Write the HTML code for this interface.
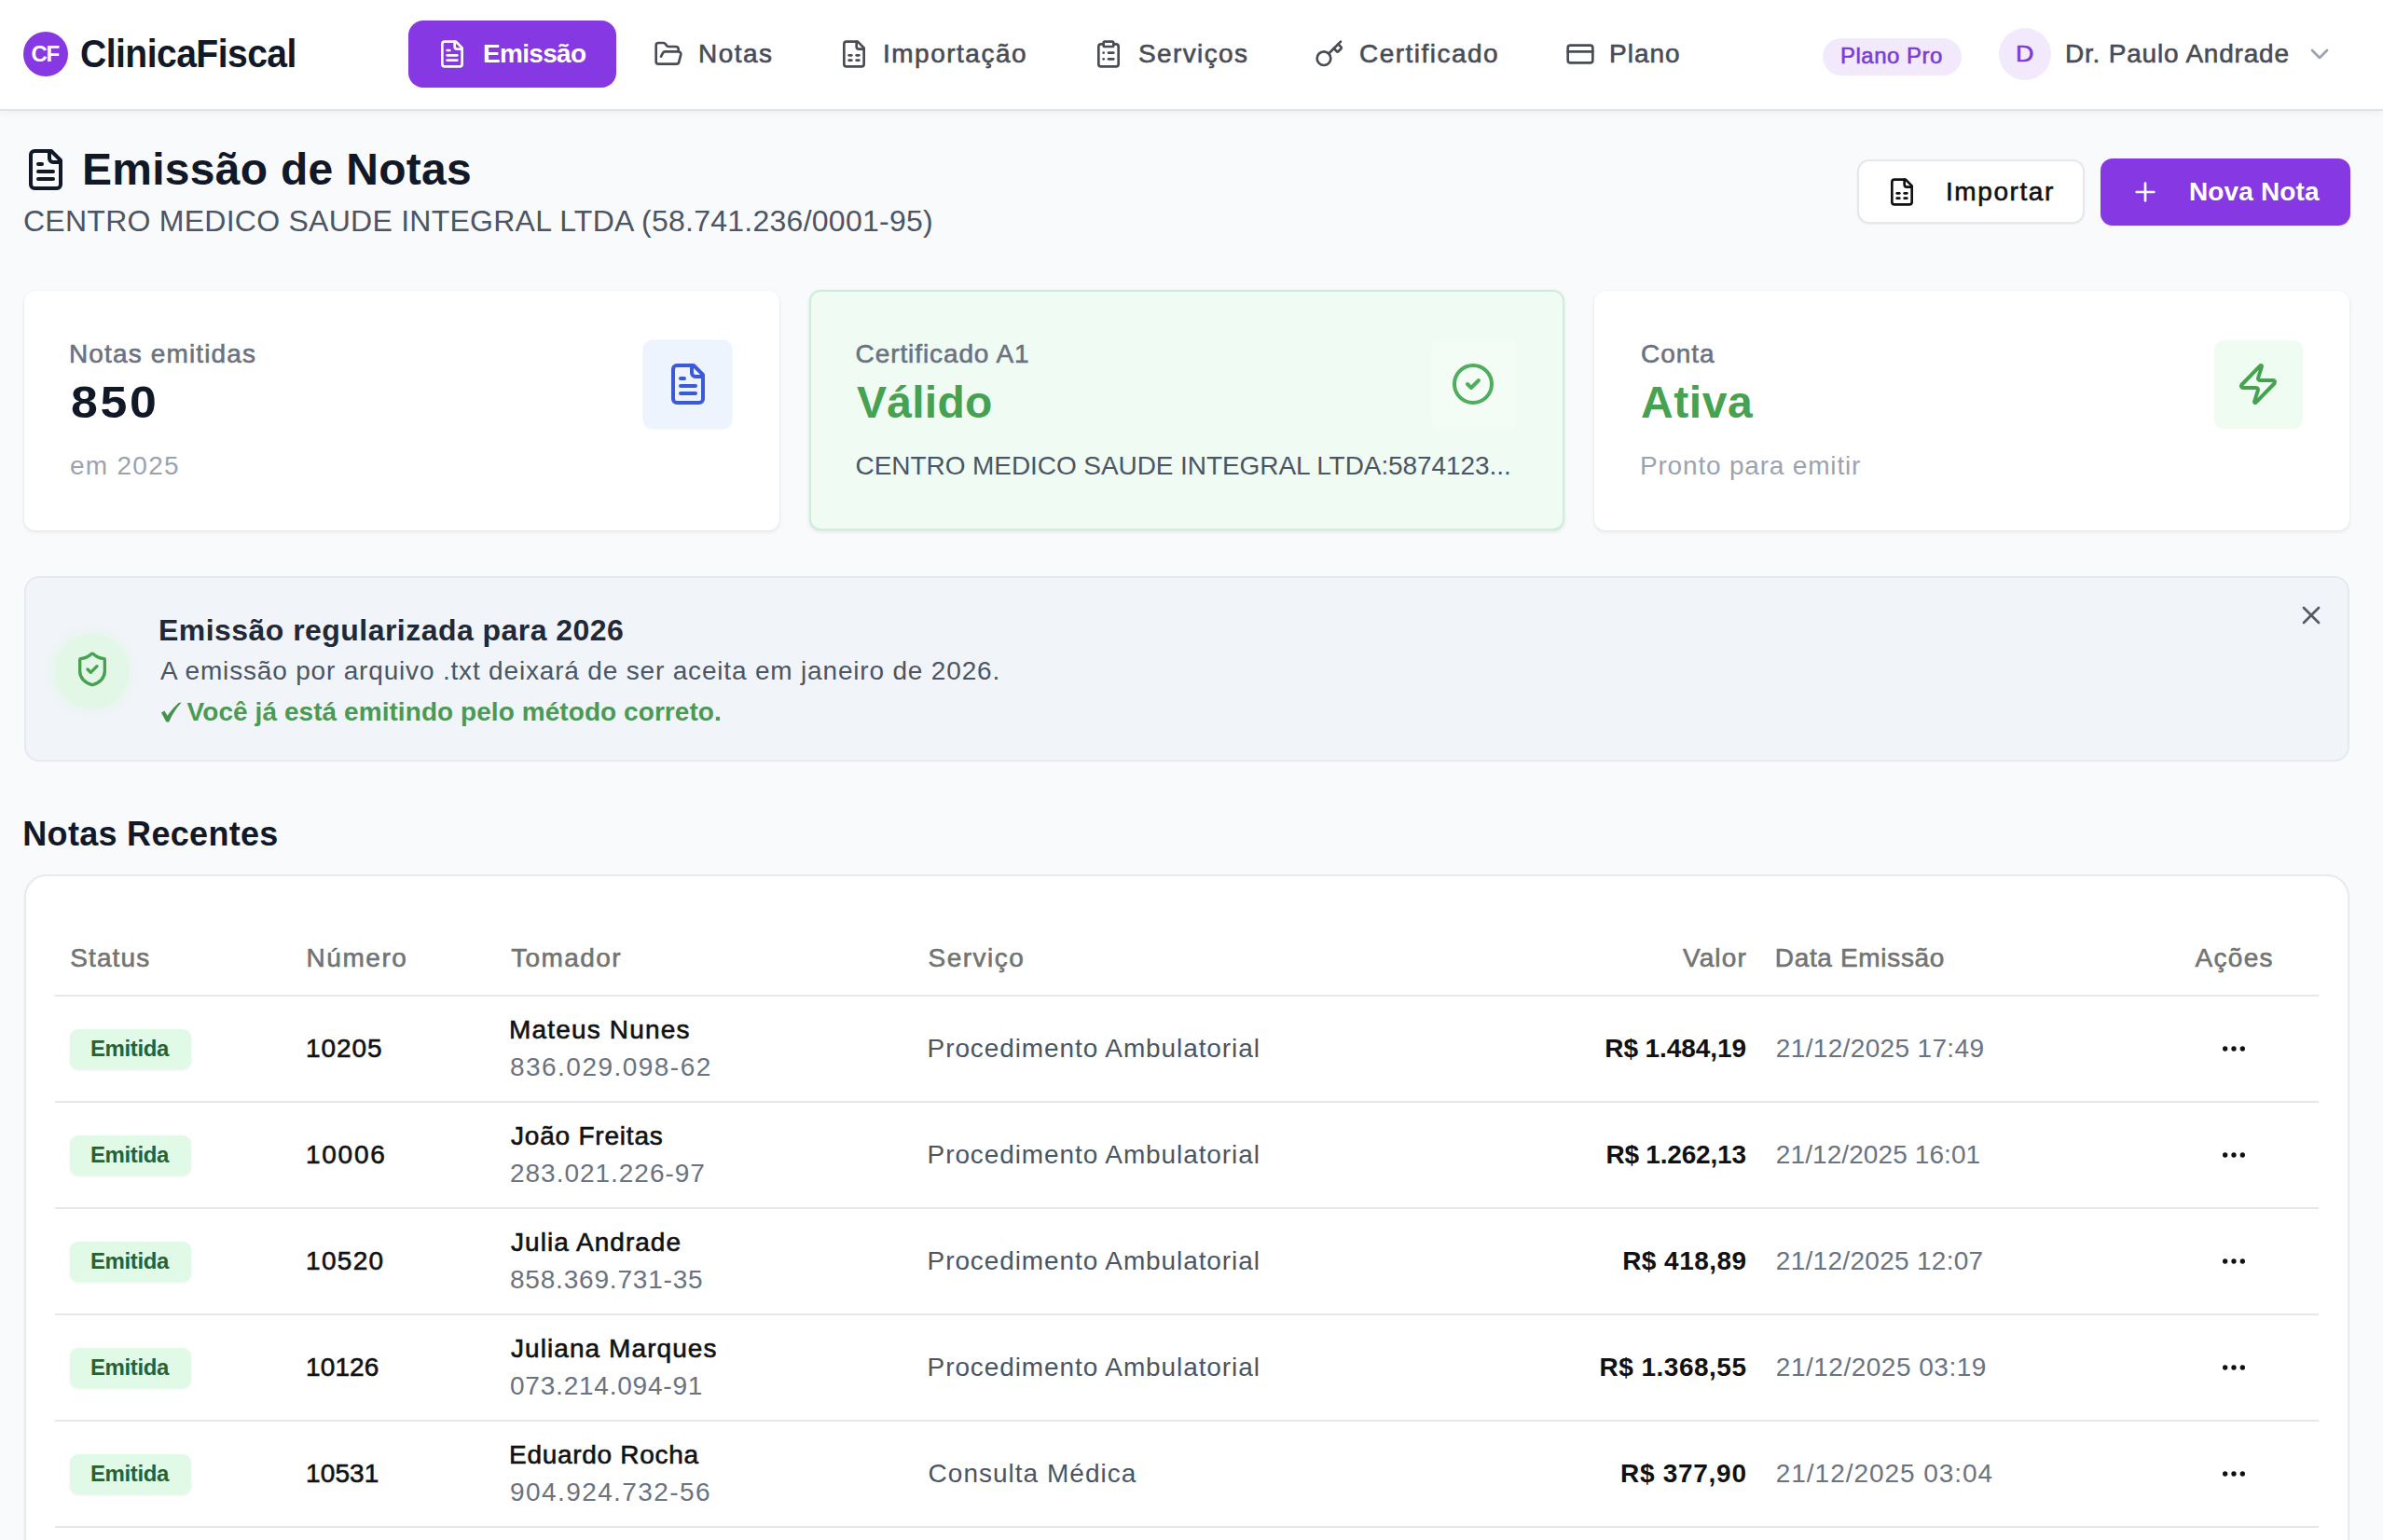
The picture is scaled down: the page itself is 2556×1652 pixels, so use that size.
<!DOCTYPE html>
<html lang="pt-BR"><head><meta charset="utf-8"><title>ClinicaFiscal</title>
<style>
html,body{margin:0;padding:0;}
body{width:2556px;height:1652px;overflow:hidden;position:relative;background:#f9fafb;font-family:"Liberation Sans",sans-serif;}
.b{position:absolute;box-sizing:border-box;}
.t{position:absolute;line-height:1;white-space:nowrap;}
.i{position:absolute;display:block;}
</style></head><body>

<div class="b" style="left:0px;top:0px;width:2556px;height:119px;background:#fff;border-bottom:2px solid #e1e3e6;box-shadow:0 2px 8px rgba(0,0,0,0.05);"></div>
<div class="b" style="left:25px;top:34px;width:48px;height:48px;background:#8639e2;border-radius:50%;"></div>
<div class="b" style="left:438px;top:22px;width:223px;height:72px;background:#8639e2;border-radius:16px;"></div>
<div class="b" style="left:1955px;top:41px;width:149px;height:40px;background:#f2eafc;border-radius:20px;"></div>
<div class="b" style="left:2144px;top:30px;width:56px;height:56px;background:#f2eafc;border-radius:50%;"></div>
<div class="b" style="left:1992px;top:171px;width:244px;height:69px;background:#fff;border:2px solid #e6e7ea;border-radius:13px;box-shadow:0 1px 2px rgba(0,0,0,0.05);"></div>
<div class="b" style="left:2253px;top:170px;width:268px;height:72px;background:#8639e2;border-radius:13px;box-shadow:0 1px 2px rgba(0,0,0,0.08);"></div>
<div class="b" style="left:25.5px;top:312px;width:810.0px;height:257px;background:#fff;border-radius:12px;box-shadow:0 2px 4px rgba(0,0,0,0.08),0 0 2px rgba(0,0,0,0.05);"></div>
<div class="b" style="left:690px;top:365px;width:95px;height:95px;background:#eef4fd;border-radius:10px;box-shadow:0 0 2px rgba(220,230,245,0.8);"></div>
<div class="b" style="left:867.5px;top:310.5px;width:810.0px;height:258.5px;background:#f0fcf3;border:2px solid #cdeed9;border-radius:12px;box-shadow:0 2px 4px rgba(0,0,0,0.08),0 0 2px rgba(0,0,0,0.05);"></div>
<div class="b" style="left:1535px;top:365px;width:92px;height:95px;background:#f3fcf5;border-radius:10px;"></div>
<div class="b" style="left:1709.5px;top:312px;width:810.0px;height:257px;background:#fff;border-radius:12px;box-shadow:0 2px 4px rgba(0,0,0,0.08),0 0 2px rgba(0,0,0,0.05);"></div>
<div class="b" style="left:2375px;top:365px;width:95px;height:95px;background:#effcf2;border-radius:10px;"></div>
<div class="b" style="left:25.5px;top:618px;width:2494.0px;height:199px;background:#f1f4f8;border:2px solid #e6e9ee;border-radius:16px;"></div>
<div class="b" style="left:58px;top:680px;width:80px;height:80px;background:#e2f7e6;border-radius:50%;box-shadow:0 0 8px 4px rgba(226,247,230,0.6);"></div>
<div class="b" style="left:25.5px;top:938.4px;width:2494.0px;height:821.6px;background:#fff;border:2px solid #e8eaee;border-radius:24px;box-shadow:0 1px 3px rgba(0,0,0,0.04);"></div>
<div class="b" style="left:58.6px;top:1067px;width:2428.0px;height:2px;background:#e5e7eb;"></div>
<div class="b" style="left:75px;top:1103.7px;width:130px;height:43.59999999999991px;background:#e1f9e7;border-radius:9px;box-shadow:0 1px 3px rgba(0,0,0,0.07);"></div>
<div class="b" style="left:58.6px;top:1181px;width:2428.0px;height:2px;background:#e5e7eb;"></div>
<div class="b" style="left:75px;top:1217.7px;width:130px;height:43.59999999999991px;background:#e1f9e7;border-radius:9px;box-shadow:0 1px 3px rgba(0,0,0,0.07);"></div>
<div class="b" style="left:58.6px;top:1295px;width:2428.0px;height:2px;background:#e5e7eb;"></div>
<div class="b" style="left:75px;top:1331.7px;width:130px;height:43.59999999999991px;background:#e1f9e7;border-radius:9px;box-shadow:0 1px 3px rgba(0,0,0,0.07);"></div>
<div class="b" style="left:58.6px;top:1409px;width:2428.0px;height:2px;background:#e5e7eb;"></div>
<div class="b" style="left:75px;top:1445.7px;width:130px;height:43.59999999999991px;background:#e1f9e7;border-radius:9px;box-shadow:0 1px 3px rgba(0,0,0,0.07);"></div>
<div class="b" style="left:58.6px;top:1523px;width:2428.0px;height:2px;background:#e5e7eb;"></div>
<div class="b" style="left:75px;top:1559.7px;width:130px;height:43.59999999999991px;background:#e1f9e7;border-radius:9px;box-shadow:0 1px 3px rgba(0,0,0,0.07);"></div>
<div class="b" style="left:58.6px;top:1637px;width:2428.0px;height:2px;background:#e5e7eb;"></div>
<svg class="i" style="left:469.0px;top:41.7px" width="32" height="32" viewBox="0 0 24 24" fill="none" stroke="#fff" stroke-width="2" stroke-linecap="round" stroke-linejoin="round"><path d="M15 2H6a2 2 0 0 0-2 2v16a2 2 0 0 0 2 2h12a2 2 0 0 0 2-2V7Z"/><path d="M14 2v4a2 2 0 0 0 2 2h4"/><path d="M10 9H8"/><path d="M16 13H8"/><path d="M16 17H8"/></svg>
<svg class="i" style="left:700.7px;top:42.0px" width="32" height="32" viewBox="0 0 24 24" fill="none" stroke="#484c55" stroke-width="2" stroke-linecap="round" stroke-linejoin="round"><path d="m6 14 1.5-2.9A2 2 0 0 1 9.24 10H20a2 2 0 0 1 1.94 2.5l-1.54 6a2 2 0 0 1-1.95 1.5H4a2 2 0 0 1-2-2V5a2 2 0 0 1 2-2h3.9a2 2 0 0 1 1.69.9l.81 1.2a2 2 0 0 0 1.67.9H18a2 2 0 0 1 2 2v2"/></svg>
<svg class="i" style="left:900.0px;top:42.0px" width="32" height="32" viewBox="0 0 24 24" fill="none" stroke="#484c55" stroke-width="2" stroke-linecap="round" stroke-linejoin="round"><path d="M15 2H6a2 2 0 0 0-2 2v16a2 2 0 0 0 2 2h12a2 2 0 0 0 2-2V7Z"/><path d="M14 2v4a2 2 0 0 0 2 2h4"/><path d="M8 13h2"/><path d="M14 13h2"/><path d="M8 17h2"/><path d="M14 17h2"/></svg>
<svg class="i" style="left:1173.0px;top:42.0px" width="32" height="32" viewBox="0 0 24 24" fill="none" stroke="#484c55" stroke-width="2" stroke-linecap="round" stroke-linejoin="round"><rect width="8" height="4" x="8" y="2" rx="1" ry="1"/><path d="M16 4h2a2 2 0 0 1 2 2v14a2 2 0 0 1-2 2H6a2 2 0 0 1-2-2V6a2 2 0 0 1 2-2h2"/><path d="M12 11h4"/><path d="M12 16h4"/><path d="M8 11h.01"/><path d="M8 16h.01"/></svg>
<svg class="i" style="left:1410.0px;top:42.0px" width="32" height="32" viewBox="0 0 24 24" fill="none" stroke="#484c55" stroke-width="2" stroke-linecap="round" stroke-linejoin="round"><path d="m15.5 7.5 2.3 2.3a1 1 0 0 0 1.4 0l2.1-2.1a1 1 0 0 0 0-1.4L19 4"/><path d="m21 2-9.6 9.6"/><circle cx="7.5" cy="15.5" r="5.5"/></svg>
<svg class="i" style="left:1678.7px;top:42.0px" width="32" height="32" viewBox="0 0 24 24" fill="none" stroke="#484c55" stroke-width="2" stroke-linecap="round" stroke-linejoin="round"><rect width="20" height="14" x="2" y="5" rx="2"/><line x1="2" x2="22" y1="10" y2="10"/></svg>
<svg class="i" style="left:2472.3px;top:42.0px" width="32" height="32" viewBox="0 0 24 24" fill="none" stroke="#9ca3af" stroke-width="2" stroke-linecap="round" stroke-linejoin="round"><path d="m6 9 6 6 6-6"/></svg>
<svg class="i" style="left:25.0px;top:158.0px" width="48" height="48" viewBox="0 0 24 24" fill="none" stroke="#111827" stroke-width="2" stroke-linecap="round" stroke-linejoin="round"><path d="M15 2H6a2 2 0 0 0-2 2v16a2 2 0 0 0 2 2h12a2 2 0 0 0 2-2V7Z"/><path d="M14 2v4a2 2 0 0 0 2 2h4"/><path d="M10 9H8"/><path d="M16 13H8"/><path d="M16 17H8"/></svg>
<svg class="i" style="left:2024.0px;top:190.0px" width="32" height="32" viewBox="0 0 24 24" fill="none" stroke="#111111" stroke-width="2" stroke-linecap="round" stroke-linejoin="round"><path d="M15 2H6a2 2 0 0 0-2 2v16a2 2 0 0 0 2 2h12a2 2 0 0 0 2-2V7Z"/><path d="M14 2v4a2 2 0 0 0 2 2h4"/><path d="M8 13h2"/><path d="M14 13h2"/><path d="M8 17h2"/><path d="M14 17h2"/></svg>
<svg class="i" style="left:2284.7px;top:190.0px" width="32" height="32" viewBox="0 0 24 24" fill="none" stroke="#ffffff" stroke-width="2" stroke-linecap="round" stroke-linejoin="round"><path d="M5 12h14"/><path d="M12 5v14"/></svg>
<svg class="i" style="left:714.0px;top:388.0px" width="48" height="48" viewBox="0 0 24 24" fill="none" stroke="#3b5bd6" stroke-width="2" stroke-linecap="round" stroke-linejoin="round"><path d="M15 2H6a2 2 0 0 0-2 2v16a2 2 0 0 0 2 2h12a2 2 0 0 0 2-2V7Z"/><path d="M14 2v4a2 2 0 0 0 2 2h4"/><path d="M10 9H8"/><path d="M16 13H8"/><path d="M16 17H8"/></svg>
<svg class="i" style="left:1556.0px;top:388.0px" width="48" height="48" viewBox="0 0 24 24" fill="none" stroke="#4fae5c" stroke-width="2" stroke-linecap="round" stroke-linejoin="round"><circle cx="12" cy="12" r="10"/><path d="m9 12 2 2 4-4"/></svg>
<svg class="i" style="left:2398.0px;top:388.0px" width="48" height="48" viewBox="0 0 24 24" fill="none" stroke="#46a150" stroke-width="2" stroke-linecap="round" stroke-linejoin="round"><path d="M4 14a1 1 0 0 1-.78-1.63l9.9-10.2a.5.5 0 0 1 .86.46l-1.92 6.02A1 1 0 0 0 13 10h7a1 1 0 0 1 .78 1.63l-9.9 10.2a.5.5 0 0 1-.86-.46l1.92-6.02A1 1 0 0 0 11 14z"/></svg>
<svg class="i" style="left:79.0px;top:698.0px" width="40" height="40" viewBox="0 0 24 24" fill="none" stroke="#46a150" stroke-width="2" stroke-linecap="round" stroke-linejoin="round"><path d="M20 13c0 5-3.5 7.5-7.66 8.95a1 1 0 0 1-.67-.01C7.5 20.5 4 18 4 13V6a1 1 0 0 1 1-1c2 0 4.5-1.2 6.24-2.72a1.17 1.17 0 0 1 1.52 0C14.51 3.81 17 5 19 5a1 1 0 0 1 1 1z"/><path d="m9 12 2 2 4-4"/></svg>
<svg class="i" style="left:2463.0px;top:644.0px" width="32" height="32" viewBox="0 0 24 24" fill="none" stroke="#555a63" stroke-width="2" stroke-linecap="round" stroke-linejoin="round"><path d="M18 6 6 18"/><path d="m6 6 12 12"/></svg>
<svg class="i" style="left:2380.0px;top:1109.0px" width="32" height="32" viewBox="0 0 24 24" fill="none" stroke="#111111" stroke-width="2" stroke-linecap="round" stroke-linejoin="round"><circle cx="12" cy="12" r="1"/><circle cx="19" cy="12" r="1"/><circle cx="5" cy="12" r="1"/></svg>
<svg class="i" style="left:2380.0px;top:1223.0px" width="32" height="32" viewBox="0 0 24 24" fill="none" stroke="#111111" stroke-width="2" stroke-linecap="round" stroke-linejoin="round"><circle cx="12" cy="12" r="1"/><circle cx="19" cy="12" r="1"/><circle cx="5" cy="12" r="1"/></svg>
<svg class="i" style="left:2380.0px;top:1337.0px" width="32" height="32" viewBox="0 0 24 24" fill="none" stroke="#111111" stroke-width="2" stroke-linecap="round" stroke-linejoin="round"><circle cx="12" cy="12" r="1"/><circle cx="19" cy="12" r="1"/><circle cx="5" cy="12" r="1"/></svg>
<svg class="i" style="left:2380.0px;top:1451.0px" width="32" height="32" viewBox="0 0 24 24" fill="none" stroke="#111111" stroke-width="2" stroke-linecap="round" stroke-linejoin="round"><circle cx="12" cy="12" r="1"/><circle cx="19" cy="12" r="1"/><circle cx="5" cy="12" r="1"/></svg>
<svg class="i" style="left:2380.0px;top:1565.0px" width="32" height="32" viewBox="0 0 24 24" fill="none" stroke="#111111" stroke-width="2" stroke-linecap="round" stroke-linejoin="round"><circle cx="12" cy="12" r="1"/><circle cx="19" cy="12" r="1"/><circle cx="5" cy="12" r="1"/></svg>
<div class="t" id="cf" style="top:45.68px;font-size:24px;font-weight:700;color:#fff;letter-spacing:-1.332px;left:33.50px;">CF</div>
<div class="t" id="logo" style="top:37.45px;font-size:42px;font-weight:700;color:#111827;letter-spacing:-0.573px;transform:scaleX(0.93);transform-origin:0 0;left:86.07px;">ClinicaFiscal</div>
<div class="t" id="nav1" style="top:43.90px;font-size:28px;font-weight:700;color:#fff;letter-spacing:-0.678px;left:518.00px;">Emissão</div>
<div class="t" id="nav2" style="top:43.90px;font-size:28px;font-weight:400;color:#484c55;-webkit-text-stroke:0.6px #484c55;letter-spacing:1.464px;left:749.00px;">Notas</div>
<div class="t" id="nav3" style="top:43.90px;font-size:28px;font-weight:400;color:#484c55;-webkit-text-stroke:0.6px #484c55;letter-spacing:1.500px;left:947.00px;">Importação</div>
<div class="t" id="nav4" style="top:43.90px;font-size:28px;font-weight:400;color:#484c55;-webkit-text-stroke:0.6px #484c55;letter-spacing:1.376px;left:1221.00px;">Serviços</div>
<div class="t" id="nav5" style="top:43.90px;font-size:28px;font-weight:400;color:#484c55;-webkit-text-stroke:0.6px #484c55;letter-spacing:1.474px;left:1458.00px;">Certificado</div>
<div class="t" id="nav6" style="top:43.90px;font-size:28px;font-weight:400;color:#484c55;-webkit-text-stroke:0.6px #484c55;letter-spacing:0.990px;left:1726.00px;">Plano</div>
<div class="t" id="plan" style="top:47.68px;font-size:24px;font-weight:400;color:#7e3ad6;-webkit-text-stroke:0.6px #7e3ad6;letter-spacing:0.494px;left:1974.00px;">Plano Pro</div>
<div class="t" id="avD" style="top:45.68px;font-size:24px;font-weight:400;color:#7e3ad6;-webkit-text-stroke:0.6px #7e3ad6;left:2163.00px;transform:scaleX(1.12);">D</div>
<div class="t" id="user" style="top:44.30px;font-size:28px;font-weight:400;color:#484c55;-webkit-text-stroke:0.6px #484c55;letter-spacing:0.797px;left:2215.00px;">Dr. Paulo Andrade</div>
<div class="t" id="title" style="top:158.37px;font-size:48px;font-weight:700;color:#111827;letter-spacing:0.281px;left:88.00px;">Emissão de Notas</div>
<div class="t" id="sub" style="top:221.41px;font-size:32px;font-weight:400;color:#4b5563;letter-spacing:0.256px;left:25.00px;">CENTRO MEDICO SAUDE INTEGRAL LTDA (58.741.236/0001-95)</div>
<div class="t" id="imp" style="top:192.30px;font-size:28px;font-weight:400;color:#111111;-webkit-text-stroke:0.6px #111111;letter-spacing:1.582px;left:2087.00px;">Importar</div>
<div class="t" id="nova" style="top:192.30px;font-size:28px;font-weight:700;color:#fff;letter-spacing:0.138px;left:2348.00px;">Nova Nota</div>
<div class="t" id="c1l" style="top:365.90px;font-size:28px;font-weight:400;color:#6b7280;-webkit-text-stroke:0.6px #6b7280;letter-spacing:1.140px;left:74.00px;">Notas emitidas</div>
<div class="t" id="c1v" style="top:408.07px;font-size:48px;font-weight:700;color:#111827;letter-spacing:2.508px;transform:scaleX(1.08);transform-origin:0 0;left:75.92px;">850</div>
<div class="t" id="c1s" style="top:486.30px;font-size:28px;font-weight:400;color:#9ca3af;letter-spacing:1.268px;left:75.00px;">em 2025</div>
<div class="t" id="c2l" style="top:365.90px;font-size:28px;font-weight:400;color:#6b7280;-webkit-text-stroke:0.6px #6b7280;letter-spacing:0.901px;left:917.60px;">Certificado A1</div>
<div class="t" id="c2v" style="top:408.17px;font-size:48px;font-weight:700;color:#46a150;letter-spacing:0.259px;left:919.00px;">Válido</div>
<div class="t" id="c2s" style="top:486.10px;font-size:28px;font-weight:400;color:#4b5563;letter-spacing:-0.076px;left:917.60px;">CENTRO MEDICO SAUDE INTEGRAL LTDA:5874123...</div>
<div class="t" id="c3l" style="top:365.90px;font-size:28px;font-weight:400;color:#6b7280;-webkit-text-stroke:0.6px #6b7280;letter-spacing:0.964px;left:1760.00px;">Conta</div>
<div class="t" id="c3v" style="top:408.17px;font-size:48px;font-weight:700;color:#46a150;letter-spacing:0.580px;left:1760.00px;">Ativa</div>
<div class="t" id="c3s" style="top:486.30px;font-size:28px;font-weight:400;color:#9ca3af;letter-spacing:0.811px;left:1759.00px;">Pronto para emitir</div>
<div class="t" id="bt" style="top:659.61px;font-size:32px;font-weight:700;color:#1f2937;letter-spacing:0.455px;left:170.00px;">Emissão regularizada para 2026</div>
<div class="t" id="b2" style="top:706.10px;font-size:28px;font-weight:400;color:#4b5563;letter-spacing:0.822px;left:172.00px;">A emissão por arquivo .txt deixará de ser aceita em janeiro de 2026.</div>
<div class="t" id="b3" style="top:750.30px;font-size:28px;font-weight:700;color:#4a9a55;letter-spacing:0.066px;left:200.60px;">Você já está emitindo pelo método correto.</div>
<div class="t" id="nr" style="top:877.03px;font-size:36px;font-weight:700;color:#111827;letter-spacing:0.301px;left:24.30px;">Notas Recentes</div>
<div class="t" id="h1" style="top:1014.30px;font-size:28px;font-weight:400;color:#737373;-webkit-text-stroke:0.6px #737373;letter-spacing:1.124px;left:75.20px;">Status</div>
<div class="t" id="h2" style="top:1014.30px;font-size:28px;font-weight:400;color:#737373;-webkit-text-stroke:0.6px #737373;letter-spacing:1.557px;left:328.50px;">Número</div>
<div class="t" id="h3" style="top:1014.30px;font-size:28px;font-weight:400;color:#737373;-webkit-text-stroke:0.6px #737373;letter-spacing:1.398px;left:548.20px;">Tomador</div>
<div class="t" id="h4" style="top:1014.30px;font-size:28px;font-weight:400;color:#737373;-webkit-text-stroke:0.6px #737373;letter-spacing:1.485px;left:995.60px;">Serviço</div>
<div class="t" id="h5" style="top:1014.30px;font-size:28px;font-weight:400;color:#737373;-webkit-text-stroke:0.6px #737373;letter-spacing:1.134px;right:682.14px;">Valor</div>
<div class="t" id="h6" style="top:1014.30px;font-size:28px;font-weight:400;color:#737373;-webkit-text-stroke:0.6px #737373;letter-spacing:0.662px;left:1903.80px;">Data Emissão</div>
<div class="t" id="h7" style="top:1014.30px;font-size:28px;font-weight:400;color:#737373;-webkit-text-stroke:0.6px #737373;letter-spacing:1.295px;left:2354.50px;">Ações</div>
<div class="t" id="r0b" style="top:1112.68px;font-size:24px;font-weight:700;color:#276234;letter-spacing:-0.389px;left:97.00px;">Emitida</div>
<div class="t" id="r0n" style="top:1110.90px;font-size:28px;font-weight:400;color:#111111;-webkit-text-stroke:0.6px #111111;letter-spacing:0.928px;left:328.00px;">10205</div>
<div class="t" id="r0t" style="top:1090.90px;font-size:28px;font-weight:400;color:#111111;-webkit-text-stroke:0.6px #111111;letter-spacing:1.178px;left:546.00px;">Mateus Nunes</div>
<div class="t" id="r0c" style="top:1131.30px;font-size:28px;font-weight:400;color:#6b7280;letter-spacing:1.469px;left:547.00px;">836.029.098-62</div>
<div class="t" id="r0s" style="top:1111.10px;font-size:28px;font-weight:400;color:#4b5563;letter-spacing:0.902px;left:994.60px;">Procedimento Ambulatorial</div>
<div class="t" id="r0v" style="top:1110.90px;font-size:28px;font-weight:700;color:#111111;letter-spacing:-0.089px;right:683.12px;">R$ 1.484,19</div>
<div class="t" id="r0d" style="top:1110.90px;font-size:28px;font-weight:400;color:#6b7280;letter-spacing:0.346px;left:1904.80px;">21/12/2025 17:49</div>
<div class="t" id="r1b" style="top:1226.68px;font-size:24px;font-weight:700;color:#276234;letter-spacing:-0.389px;left:97.00px;">Emitida</div>
<div class="t" id="r1n" style="top:1224.90px;font-size:28px;font-weight:400;color:#111111;-webkit-text-stroke:0.6px #111111;letter-spacing:1.728px;left:328.00px;">10006</div>
<div class="t" id="r1t" style="top:1204.90px;font-size:28px;font-weight:400;color:#111111;-webkit-text-stroke:0.6px #111111;letter-spacing:0.794px;left:548.00px;">João Freitas</div>
<div class="t" id="r1c" style="top:1245.30px;font-size:28px;font-weight:400;color:#6b7280;letter-spacing:0.977px;left:547.00px;">283.021.226-97</div>
<div class="t" id="r1s" style="top:1225.10px;font-size:28px;font-weight:400;color:#4b5563;letter-spacing:0.902px;left:994.60px;">Procedimento Ambulatorial</div>
<div class="t" id="r1v" style="top:1224.90px;font-size:28px;font-weight:700;color:#111111;letter-spacing:-0.199px;right:683.23px;">R$ 1.262,13</div>
<div class="t" id="r1d" style="top:1224.90px;font-size:28px;font-weight:400;color:#6b7280;letter-spacing:0.093px;left:1904.80px;">21/12/2025 16:01</div>
<div class="t" id="r2b" style="top:1340.68px;font-size:24px;font-weight:700;color:#276234;letter-spacing:-0.389px;left:97.00px;">Emitida</div>
<div class="t" id="r2n" style="top:1338.90px;font-size:28px;font-weight:400;color:#111111;-webkit-text-stroke:0.6px #111111;letter-spacing:1.328px;left:328.00px;">10520</div>
<div class="t" id="r2t" style="top:1318.90px;font-size:28px;font-weight:400;color:#111111;-webkit-text-stroke:0.6px #111111;letter-spacing:1.029px;left:548.00px;">Julia Andrade</div>
<div class="t" id="r2c" style="top:1359.30px;font-size:28px;font-weight:400;color:#6b7280;letter-spacing:0.800px;left:547.00px;">858.369.731-35</div>
<div class="t" id="r2s" style="top:1339.10px;font-size:28px;font-weight:400;color:#4b5563;letter-spacing:0.902px;left:994.60px;">Procedimento Ambulatorial</div>
<div class="t" id="r2v" style="top:1338.90px;font-size:28px;font-weight:700;color:#111111;letter-spacing:0.445px;right:682.58px;">R$ 418,89</div>
<div class="t" id="r2d" style="top:1338.90px;font-size:28px;font-weight:400;color:#6b7280;letter-spacing:0.293px;left:1904.80px;">21/12/2025 12:07</div>
<div class="t" id="r3b" style="top:1454.68px;font-size:24px;font-weight:700;color:#276234;letter-spacing:-0.389px;left:97.00px;">Emitida</div>
<div class="t" id="r3n" style="top:1452.90px;font-size:28px;font-weight:400;color:#111111;-webkit-text-stroke:0.6px #111111;letter-spacing:0.128px;left:328.00px;">10126</div>
<div class="t" id="r3t" style="top:1432.90px;font-size:28px;font-weight:400;color:#111111;-webkit-text-stroke:0.6px #111111;letter-spacing:1.075px;left:548.00px;">Juliana Marques</div>
<div class="t" id="r3c" style="top:1473.30px;font-size:28px;font-weight:400;color:#6b7280;letter-spacing:0.784px;left:547.00px;">073.214.094-91</div>
<div class="t" id="r3s" style="top:1453.10px;font-size:28px;font-weight:400;color:#4b5563;letter-spacing:0.902px;left:994.60px;">Procedimento Ambulatorial</div>
<div class="t" id="r3v" style="top:1452.90px;font-size:28px;font-weight:700;color:#111111;letter-spacing:0.501px;right:682.53px;">R$ 1.368,55</div>
<div class="t" id="r3d" style="top:1452.90px;font-size:28px;font-weight:400;color:#6b7280;letter-spacing:0.506px;left:1904.80px;">21/12/2025 03:19</div>
<div class="t" id="r4b" style="top:1568.68px;font-size:24px;font-weight:700;color:#276234;letter-spacing:-0.389px;left:97.00px;">Emitida</div>
<div class="t" id="r4n" style="top:1566.90px;font-size:28px;font-weight:400;color:#111111;-webkit-text-stroke:0.6px #111111;letter-spacing:0.128px;left:328.00px;">10531</div>
<div class="t" id="r4t" style="top:1546.90px;font-size:28px;font-weight:400;color:#111111;-webkit-text-stroke:0.6px #111111;letter-spacing:0.708px;left:546.00px;">Eduardo Rocha</div>
<div class="t" id="r4c" style="top:1587.30px;font-size:28px;font-weight:400;color:#6b7280;letter-spacing:1.415px;left:547.00px;">904.924.732-56</div>
<div class="t" id="r4s" style="top:1567.10px;font-size:28px;font-weight:400;color:#4b5563;letter-spacing:1.009px;left:995.60px;">Consulta Médica</div>
<div class="t" id="r4v" style="top:1566.90px;font-size:28px;font-weight:700;color:#111111;letter-spacing:0.720px;right:682.31px;">R$ 377,90</div>
<div class="t" id="r4d" style="top:1566.90px;font-size:28px;font-weight:400;color:#6b7280;letter-spacing:0.959px;left:1904.80px;">21/12/2025 03:04</div>
<svg style="position:absolute;left:170px;top:750px" width="28" height="28" viewBox="0 0 28 28"><path d="M3 14.6 L6.4 12.4 L9.6 17.8 Q14 11 21.6 4 L24.6 3.4 Q16 13 11.2 24.4 L8.4 24.4 Z" fill="#44924e"/></svg>
</body></html>
